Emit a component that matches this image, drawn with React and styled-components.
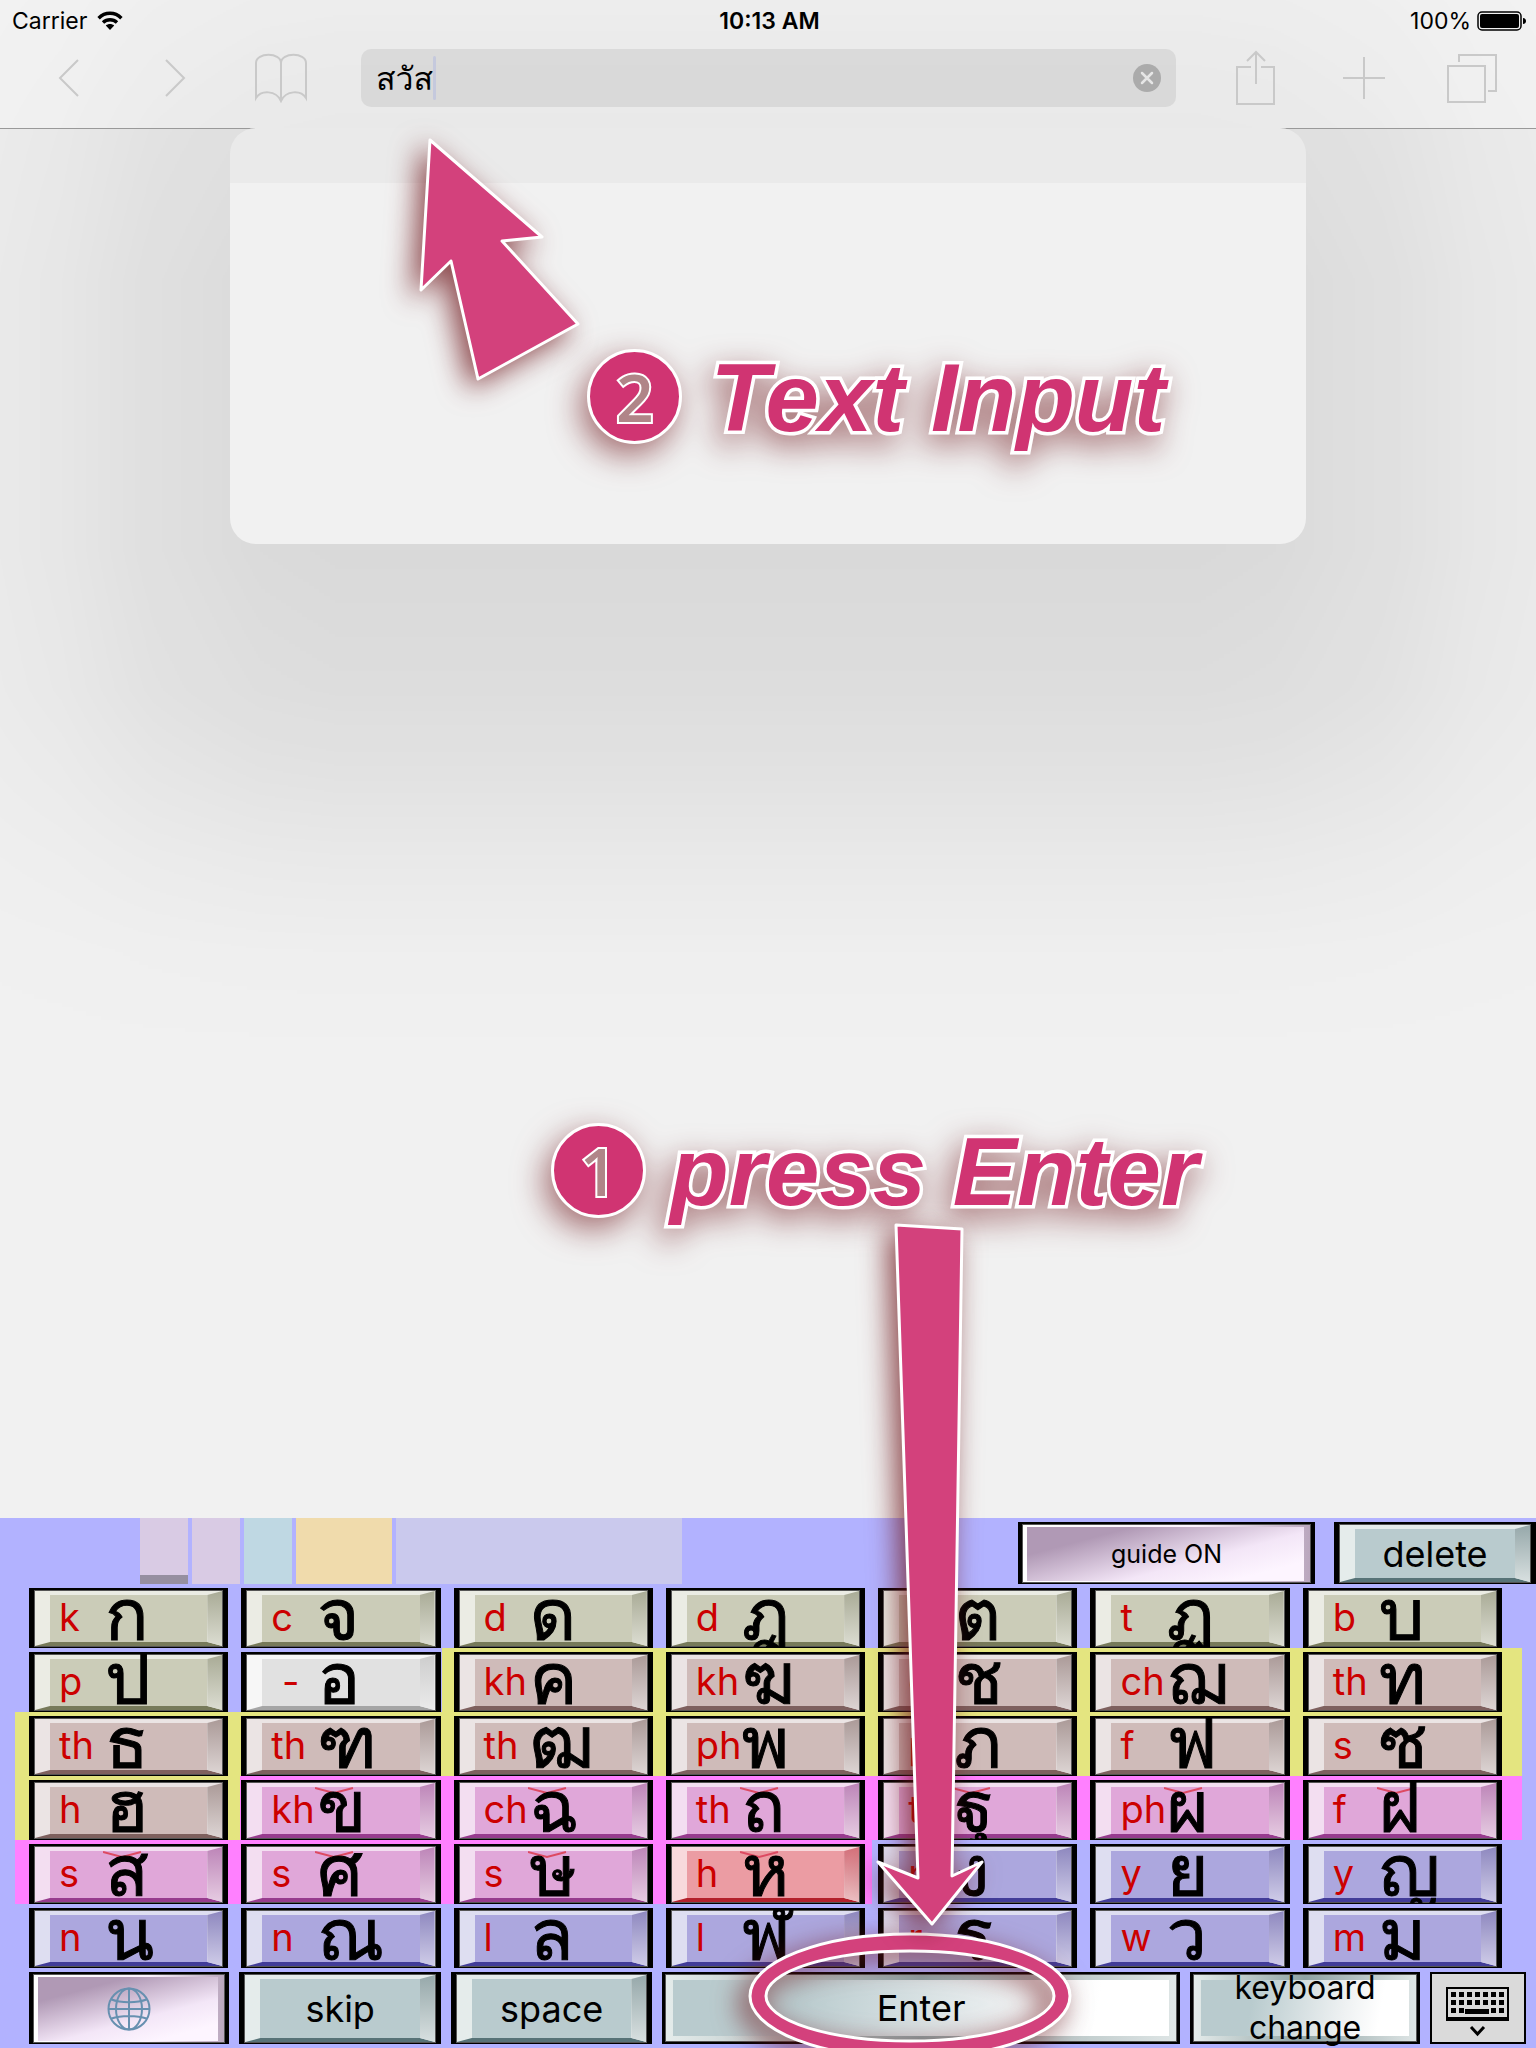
import React, { useState } from 'react'
import styled, { createGlobalStyle, css } from 'styled-components'

const GlobalStyle = createGlobalStyle`
  * {
    box-sizing: border-box;
  }

  body {
    margin: 0;
    font-family: Inter, Loma, Waree, "Noto Sans Thai Looped", Garuda, Umpush, sans-serif;
    color: #000;
    background: #f1f1f1;
  }

  button, input {
    font: inherit;
    color: inherit;
    padding: 0;
    border: 0;
    background: none;
  }
`

const Page = styled.div`
  position: relative;
  display: flex;
  flex-direction: column;
  min-height: 100vh;
  overflow: hidden;
`

/* soft shade around the suggestion panel */
const Shade = styled.div`
  position: absolute;
  inset: 0 0 auto 0;
  height: 1060px;
  background: rgba(0, 0, 0, 0.098);
  mask-image:
    linear-gradient(
      90deg,
      rgba(0, 0, 0, 0.3), rgba(0, 0, 0, 0.42) 4%, rgba(0, 0, 0, 0.72) 10%, rgba(0, 0, 0, 0.94) 17%, #000 22%,
      #000 78%, rgba(0, 0, 0, 0.94) 83%, rgba(0, 0, 0, 0.72) 90%, rgba(0, 0, 0, 0.42) 96%, rgba(0, 0, 0, 0.3)
    ),
    linear-gradient(
      rgba(0, 0, 0, 0.5), rgba(0, 0, 0, 0.82) 130px, #000 280px, #000 550px, rgba(0, 0, 0, 0.84) 690px,
      rgba(0, 0, 0, 0.58) 780px, rgba(0, 0, 0, 0.32) 860px, rgba(0, 0, 0, 0.1) 950px, transparent
    );
  mask-composite: intersect;
`

const Header = styled.header`
  position: relative;
  z-index: 1;
  border-bottom: 1px solid #999;
  background: rgba(250, 250, 250, 0.4);
`

const StatusBar = styled.div`
  display: grid;
  grid-template-columns: 1fr auto 1fr;
  align-items: center;
  height: 42px;
  padding: 0 9px 0 12px;
  font-size: 23px;
  line-height: 42px;
`

const StatusSide = styled.div`
  display: flex;
  align-items: center;
  justify-content: ${(props) => (props.$end ? 'flex-end' : 'flex-start')};
  gap: ${(props) => (props.$end ? '6px' : '10px')};
`

const Clock = styled.div`
  font-weight: 600;
`

const Toolbar = styled.nav`
  display: flex;
  align-items: center;
  height: 86px;
  padding: 0 38px 14px 43px;
  color: #c9c9c9;
`

const ToolGroup = styled.div`
  display: flex;
  align-items: center;
  gap: ${(props) => props.$gap}px;
`

const ToolButton = styled.button`
  display: flex;
  align-items: center;
  justify-content: center;
  width: 52px;
  height: 60px;
`

const AddressBar = styled.label`
  flex: 1;
  display: flex;
  align-items: center;
  height: 58px;
  margin: 0 54px;
  padding: 0 15px;
  border-radius: 10px;
  background: rgba(0, 0, 0, 0.07);
`

const AddressInput = styled.input`
  field-sizing: content;
  height: 58px;
  outline: none;
  color: #000;
  font-size: 32px;
`

const Caret = styled.span`
  width: 3px;
  height: 44px;
  border-radius: 2px;
  background: #c5c9dd;
`

const ClearButton = styled.button`
  display: flex;
  width: 28px;
  height: 28px;
  margin-left: auto;
`

const Content = styled.main`
  flex: 1;
  display: flex;
  flex-direction: column;
`

const Panel = styled.section`
  position: relative;
  width: 70%;
  height: 416px;
  margin: -1px auto 0;
  border-radius: 26px;
  background: linear-gradient(#eaeaea 55px, #f1f1f1 55px);
  z-index: 2;
`

const Callout = styled.h2`
  display: flex;
  align-items: center;
  gap: ${(props) => props.$gap}px;
  margin: 0;
  padding: ${(props) => props.$inset};
  color: #d03472;
  font: italic 700 96px/110px "Liberation Sans", Arial, sans-serif;
  white-space: nowrap;
  -webkit-text-stroke: 7px #fff;
  paint-order: stroke fill;
  filter: drop-shadow(-6px 11px 16px rgba(110, 20, 25, 0.6));
`

const StepNumber = styled.span`
  display: flex;
  align-items: center;
  justify-content: center;
  width: 95px;
  height: 95px;
  margin-bottom: 4px;
  border: 3px solid #fff;
  border-radius: 50%;
  background: #d03472;
  color: #b08588;
  font: 600 66px/90px "Open Sans", "Noto Sans", sans-serif;
  -webkit-text-stroke: 4px #fff;
`

const arrow = css`
  position: absolute;
  overflow: visible;
  pointer-events: none;
  z-index: 3;
  fill: #d3417c;
  stroke: #fff;
  stroke-width: 3;
  stroke-linejoin: round;
  filter: drop-shadow(-8px 8px 14px rgba(110, 20, 25, 0.75));
`

const InputArrow = styled.svg`
  ${arrow}
  left: 190px;
  top: 12px;
`

const EnterArrow = styled.svg`
  ${arrow}
  bottom: 124px;
  left: 57%;
`

const EnterRing = styled.svg`
  ${arrow}
  left: 84px;
  top: -41px;
`

const Keyboard = styled.section`
  background: #b2b2ff;
  padding-bottom: 4px;
`

const CandidateBar = styled.div`
  display: flex;
  align-items: flex-end;
  height: 66px;
  padding-left: 140px;
`

const Swatch = styled.div`
  width: ${(props) => props.$width}px;
  height: 66px;
  margin-right: 4px;
  background: ${(props) => props.$color};
  border-bottom: ${(props) => (props.$marked ? '9px solid #968fa0' : '0')};
`

const KeyRow = styled.div`
  display: grid;
  grid-template-columns: repeat(7, 1fr);
  gap: 13px;
  height: 64px;
  padding: 4px 34px 0 29px;
  background: ${(props) => (props.$bands ? `linear-gradient(90deg, ${props.$bands})` : 'none')};
`

const BottomRow = styled.div`
  display: grid;
  grid-template-columns: 201fr 202fr 202fr 519fr 231fr 96fr;
  grid-template-rows: 72px;
  gap: 10px;
  height: 76px;
  padding: 4px 10px 0 29px;
`

const tones = {
  olive: { face: '#cbccb8', light: '#ebece4', shade: '#a9ab96', glow: '#dcddd2', base: '#777a5a' },
  grey: { face: '#e1e1e1', light: '#f7f7f7', shade: '#cdcdcd', glow: '#ebebeb', base: '#a5a5a5' },
  rose: { face: '#cfbbb9', light: '#ebe4e4', shade: '#ab9a98', glow: '#ddd5d4', base: '#7e605e' },
  pink: { face: '#e0a7d9', light: '#f3def1', shade: '#bd85b8', glow: '#e6cce2', base: '#973b8e' },
  blue: { face: '#aca7de', light: '#dedef1', shade: '#8e88bf', glow: '#cfcce8', base: '#423c98' },
  red: { face: '#eb9ca3', light: '#f8d9dc', shade: '#d3707a', glow: '#ecc0c3', base: '#b3202b' },
  teal: { face: '#b9cbce', light: '#e5eceb', shade: '#96a8aa', glow: '#d8e0e0', base: '#577377' },
}

const keyFrame = css`
  position: relative;
  min-width: 0;
  overflow: hidden;
  border: solid #000;
  border-width: 2px 5px 1px 5px;
  box-shadow: inset 0 0 0 1px #555;
`

const BevelKey = styled.button`
  ${keyFrame}
  font-size: 36px;
  line-height: 44px;
  background:
    linear-gradient(${(props) => `${tones[props.$tone].face}, ${tones[props.$tone].face}`})
      16px 5px / calc(100% - 32px) calc(100% - 9px) no-repeat,
    ${(props) => tones[props.$tone].light};

  &::before {
    content: "";
    position: absolute;
    inset: auto 1px 1px 1px;
    height: 4px;
    background: ${(props) => tones[props.$tone].base};
    clip-path: polygon(0 100%, 15px 0, calc(100% - 15px) 0, 100% 100%);
  }

  &::after {
    content: "";
    position: absolute;
    inset: 1px 1px 1px auto;
    width: 15px;
    background: linear-gradient(${(props) => `${tones[props.$tone].shade}, ${tones[props.$tone].glow}`});
    clip-path: polygon(0 4px, 100% 0, 100% 100%, 0 calc(100% - 4px));
  }
`

const LetterKey = styled(BevelKey)`
  display: grid;
  grid-template-columns: 46px 1fr;
  padding-left: 25px;
  text-align: left;
`

const Roman = styled.span`
  z-index: 1;
  height: 57px;
  color: #c00;
  font-size: 38px;
  line-height: 54px;
  white-space: pre;
`

const Thai = styled.span`
  z-index: 1;
  height: 57px;
  font-size: 72px;
  line-height: 48px;
  white-space: nowrap;
  -webkit-text-stroke: 1px #000;
`

const ToneArc = styled.svg`
  position: absolute;
  left: 69px;
  top: 5px;
  fill: none;
  stroke: #dd4a62;
  stroke-width: 2;
`

const GlossKey = styled.button`
  ${keyFrame}
  display: flex;
  align-items: center;
  justify-content: center;
  font-size: 25px;
  border-width: 2px 4px 1px 4px;
  background:
    linear-gradient(165deg, #b099b5 22%, #f3e6f7 62%, #fdf5ff 85%)
      5px 3px / calc(100% - 12px) calc(100% - 5px) no-repeat,
    linear-gradient(90deg, #fff, #fdf5ff 60%, #b9a6bd);
`

const WideKey = styled.button`
  ${keyFrame}
  display: flex;
  align-items: center;
  justify-content: center;
  font-size: ${(props) => (props.$small ? '32px' : '36px')};
  line-height: ${(props) => (props.$small ? '40px' : '44px')};
  overflow: visible;
  border-width: 2px 3px 2px 3px;
  background:
    linear-gradient(100deg, #b9cbce 25%, #eef1f2 68%, #fff 85%)
      8px 6px / calc(100% - 16px) calc(100% - 12px) no-repeat,
    linear-gradient(90deg, #e5eceb, #8fa3a4 50%, #dfe6e6);
`

const HideKey = styled.button`
  display: flex;
  align-items: center;
  justify-content: center;
  border: 2px solid #000;
  background: #dadada;
`

const GuideSlot = styled.div`
  display: grid;
  grid-template-columns: 297px 202px;
  gap: 19px;
  height: 62px;
  margin-left: auto;
`

const yellow = '#e4e580'
const pink = '#ff80ff'

const rows = [
  {
    keys: [
      ['k', 'ก', 'olive'], ['c', 'จ', 'olive'], ['d', 'ด', 'olive'], ['d', 'ฎ', 'olive'],
      ['t', 'ต', 'olive'], ['t', 'ฏ', 'olive'], ['b', 'บ', 'olive'],
    ],
  },
  {
    bands: `transparent 28.8%, ${yellow} 28.8% 99.1%, transparent 99.1%`,
    keys: [
      ['p', 'ป', 'olive'], [' -', 'อ', 'grey'], ['kh', 'ค', 'rose'], ['kh', 'ฆ', 'rose'],
      ['ch', 'ช', 'rose'], ['ch', 'ฌ', 'rose'], ['th', 'ท', 'rose'],
    ],
  },
  {
    bands: `transparent 1%, ${yellow} 1% 99.1%, transparent 99.1%`,
    keys: [
      ['th', 'ธ', 'rose'], ['th', 'ฑ', 'rose'], ['th', 'ฒ', 'rose'], ['ph', 'พ', 'rose'],
      ['ph', 'ภ', 'rose'], ['f', 'ฟ', 'rose'], ['s', 'ซ', 'rose'],
    ],
  },
  {
    bands: `transparent 1%, ${yellow} 1% 15.6%, ${pink} 15.6% 99.1%, transparent 99.1%`,
    keys: [
      ['h', 'ฮ', 'rose'], ['kh', 'ข', 'pink'], ['ch', 'ฉ', 'pink'], ['th', 'ถ', 'pink'],
      ['th', 'ฐ', 'pink'], ['ph', 'ผ', 'pink'], ['f', 'ฝ', 'pink'],
    ],
  },
  {
    bands: `transparent 1%, ${pink} 1% 56.8%, transparent 56.8%`,
    keys: [
      ['s', 'ส', 'pink'], ['s', 'ศ', 'pink'], ['s', 'ษ', 'pink'], ['h', 'ห', 'red'],
      ['ng', 'ง', 'blue'], ['y', 'ย', 'blue'], ['y', 'ญ', 'blue'],
    ],
  },
  {
    keys: [
      ['n', 'น', 'blue'], ['n', 'ณ', 'blue'], ['l', 'ล', 'blue'], ['l', 'ฬ', 'blue'],
      ['r', 'ร', 'blue'], ['w', 'ว', 'blue'], ['m', 'ม', 'blue'],
    ],
  },
]

const swatches = [
  { width: 48, color: '#d9cbe4', marked: true },
  { width: 48, color: '#d9cbe4' },
  { width: 48, color: '#bfd8e3' },
  { width: 96, color: '#f0dbac' },
  { width: 286, color: '#cac9ed' },
]

const line = { fill: 'none', stroke: 'currentColor', strokeWidth: 2 }

const WifiIcon = () => (
  <svg width="26" height="20" viewBox="0 0 26 20">
    <g fill="none" stroke="#000" strokeWidth="3.4">
      <path d="M1.6 7.2C8 .6 18 .6 24.4 7.2" />
      <path d="M6 11.6C10 7.8 16 7.8 20 11.6" />
    </g>
    <path d="M13 19l-4.2-4.6c2.4-2 6-2 8.4 0z" />
  </svg>
)

const BatteryIcon = () => (
  <svg width="50" height="20" viewBox="0 0 50 20">
    <rect x="1" y="1" width="43" height="18" rx="4" fill="none" stroke="#000" strokeWidth="1.5" />
    <rect x="3" y="3" width="39" height="14" rx="2" />
    <path d="M46 7c4 0 4 6 0 6z" />
  </svg>
)

const BookIcon = () => (
  <svg width="52" height="50" viewBox="0 0 52 50" {...line}>
    <path d="M26 48V10C26-1 1-1 1 10v35c5-8 20-8 25 3 5-11 20-11 25-3V10C51-1 26-1 26 10" />
  </svg>
)

const ShareIcon = () => (
  <svg width="40" height="56" viewBox="0 0 40 56" {...line}>
    <path d="M15 17H1v37h37V17H25M20 34V2M11 11l9-9 9 9" />
  </svg>
)

const TabsIcon = () => (
  <svg width="50" height="50" viewBox="0 0 50 50" {...line}>
    <path d="M1 13h37v36H1zM12 9V2h37v36h-8" />
  </svg>
)

const GlobeIcon = () => (
  <svg width="44" height="44" viewBox="0 0 44 44" fill="none" stroke="#6790b0" strokeWidth="2">
    <circle cx="22" cy="22" r="20.5" />
    <ellipse cx="22" cy="22" rx="13" ry="20.5" />
    <path d="M22 1.5v41M1.5 22h41M4.5 12.5c9 3.5 26 3.5 35 0M4.5 31.5c9-3.5 26-3.5 35 0" />
  </svg>
)

const KeyboardIcon = () => (
  <svg width="64" height="58" viewBox="0 -8 64 58">
    <path d="M0 0h63v34H0zM2 2v28h59V2z" fillRule="evenodd" />
    {[5, 13, 21].map((y) =>
      [5, 13, 21, 29, 37, 45, 53].map((x) =>
        y === 21 && x > 13 && x < 45 ? null : <rect key={`${x}-${y}`} x={x} y={y} width="5" height="5" />
      )
    )}
    <rect x="19" y="22" width="24" height="5" />
    <path d="M25 40l6.5 7 6.5-7" fill="none" stroke="#000" strokeWidth="3" />
  </svg>
)

const App = () => {
  const [text, setText] = useState('สวัส')

  return (
    <Page>
      <GlobalStyle />
      <Shade />
      <Header>
        <StatusBar>
          <StatusSide>
            Carrier
            <WifiIcon />
          </StatusSide>
          <Clock>10:13 AM</Clock>
          <StatusSide $end>
            100%
            <BatteryIcon />
          </StatusSide>
        </StatusBar>
        <Toolbar>
          <ToolGroup $gap={54}>
            <ToolButton aria-label="Back">
              <svg width="22" height="38" viewBox="0 0 22 38" {...line}><path d="M20 1L2 19l18 18" /></svg>
            </ToolButton>
            <ToolButton aria-label="Forward">
              <svg width="22" height="38" viewBox="0 0 22 38" {...line}><path d="M2 1l18 18L2 37" /></svg>
            </ToolButton>
            <ToolButton aria-label="Bookmarks"><BookIcon /></ToolButton>
          </ToolGroup>
          <AddressBar>
            <AddressInput aria-label="Address" value={text} onChange={(e) => setText(e.target.value)} />
            <Caret />
            <ClearButton aria-label="Clear" onClick={() => setText('')}>
              <svg width="28" height="28" viewBox="0 0 28 28">
                <circle cx="14" cy="14" r="14" fill="#ababab" />
                <path d="M9 9l10 10M19 9L9 19" stroke="#e6e6e6" strokeWidth="2.5" strokeLinecap="round" />
              </svg>
            </ClearButton>
          </AddressBar>
          <ToolGroup $gap={56}>
            <ToolButton aria-label="Share"><ShareIcon /></ToolButton>
            <ToolButton aria-label="New tab">
              <svg width="42" height="42" viewBox="0 0 42 42" {...line}><path d="M21 0v42M0 21h42" /></svg>
            </ToolButton>
            <ToolButton aria-label="Tabs"><TabsIcon /></ToolButton>
          </ToolGroup>
        </Toolbar>
      </Header>

      <Content>
        <Panel>
          <InputArrow width="160" height="242" viewBox="0 0 160 242">
            <path d="M10 0L122 97 82 101 158 184 58 239 31 121 1 150z" />
          </InputArrow>
          <Callout $gap={28} $inset="215px 0 0 357px">
            <StepNumber>2</StepNumber>
            Text Input
          </Callout>
        </Panel>
        <Callout $gap={24} $inset="573px 0 0 551px">
          <StepNumber>1</StepNumber>
          press Enter
        </Callout>
      </Content>

      <Keyboard>
        <CandidateBar>
          {swatches.map((s, i) => (
            <Swatch key={i} $width={s.width} $color={s.color} $marked={s.marked} />
          ))}
          <GuideSlot>
            <GlossKey>guide ON</GlossKey>
            <BevelKey $tone="teal">delete</BevelKey>
          </GuideSlot>
        </CandidateBar>
        {rows.map((row, i) => (
          <KeyRow key={i} $bands={row.bands}>
            {row.keys.map(([roman, thai, tone]) => (
              <LetterKey key={thai} $tone={tone}>
                {(tone === 'pink' || tone === 'red') && (
                  <ToneArc width="40" height="8" viewBox="0 0 40 8"><path d="M0 1l19 5 19-5" /></ToneArc>
                )}
                <Roman>{roman}</Roman>
                <Thai lang="th">{thai}</Thai>
              </LetterKey>
            ))}
          </KeyRow>
        ))}
        <BottomRow>
          <GlossKey aria-label="Next keyboard"><GlobeIcon /></GlossKey>
          <BevelKey $tone="teal">skip</BevelKey>
          <BevelKey $tone="teal">space</BevelKey>
          <WideKey>
            Enter
            <EnterRing width="322" height="126" viewBox="0 0 322 126">
              <path
                fillRule="evenodd"
                d="M1 63a160 62 0 0 1 320 0a160 62 0 0 1-320 0zM17 63a144 45 0 0 0 288 0a144 45 0 0 0-288 0z"
              />
            </EnterRing>
          </WideKey>
          <WideKey $small>keyboard change</WideKey>
          <HideKey aria-label="Hide keyboard"><KeyboardIcon /></HideKey>
        </BottomRow>
      </Keyboard>
      <EnterArrow width="106" height="700" viewBox="0 0 106 700">
        <path d="M20 1L86 5 76 652 106 638 56 700 2 638 42 654z" />
      </EnterArrow>
    </Page>
  )
}

export default App
